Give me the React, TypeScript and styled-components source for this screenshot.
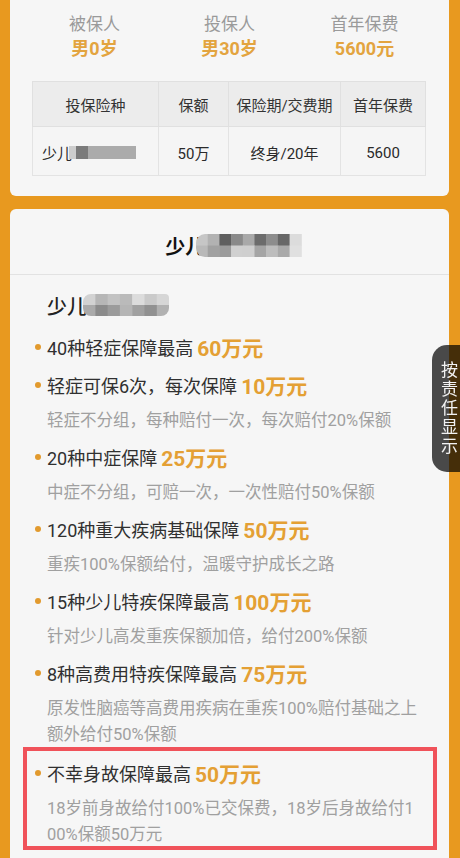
import React from "react";
import styled, { createGlobalStyle } from "styled-components";

const GlobalStyle = createGlobalStyle`
  html, body { margin: 0; padding: 0; }
  body {
    background: #e8991f;
    font-family: Roboto, "Noto Sans CJK SC", sans-serif;
    -webkit-font-smoothing: antialiased;
  }
`;

const Page = styled.div`
  padding: 0 11px 0 10px;
  background: #e8991f;
  min-height: 858px;
`;

const Card = styled.section<{ $top?: boolean }>`
  background: #f6f6f6;
  border-radius: ${(p) => (p.$top ? "0 0 6px 6px" : "6px")};
  margin-top: ${(p) => (p.$top ? "0" : "13px")};
`;

const SummaryCard = styled(Card)`
  padding: 12px 0 20px;
`;

const SummaryRow = styled.div`
  display: grid;
  grid-template-columns: repeat(3, 135px);
  padding: 0 17px;
  margin-bottom: 19px;
`;

const SummaryCol = styled.div`
  display: flex;
  flex-direction: column;
  align-items: center;
`;

const SummaryLabel = styled.div`
  font-size: 17px;
  line-height: 24px;
  color: #9a9a9a;
`;

const SummaryValue = styled.div`
  font-size: 18px;
  line-height: 26px;
  font-weight: 700;
  color: #e3a43f;
`;

const Table = styled.table`
  border-collapse: collapse;
  margin: 0 24px 0 22px;
  width: 393px;
  table-layout: fixed;
  font-size: 15px;
  color: #2a2a2a;
`;

const Th = styled.th`
  height: 44px;
  padding: 0;
  background: #ececec;
  border: 1px solid #e0e0e0;
  font-weight: 400;
  text-align: center;
  color: #333;
`;

const Td = styled.td<{ $left?: boolean }>`
  height: 45px;
  padding: ${(p) => (p.$left ? "3px 0 0 9px" : "3px 0 0")};
  border: 1px solid #e3e3e3;
  text-align: ${(p) => (p.$left ? "left" : "center")};
  background: #f5f5f5;
  white-space: nowrap;
`;

const CellName = styled.span`
  display: inline-flex;
  align-items: center;
`;

const MosaicSvg = styled.svg<{ $shift?: number; $round?: string }>`
  display: block;
  margin-left: ${(p) => p.$shift ?? 0}px;
  border-radius: ${(p) => p.$round ?? "0"};
`;

type MosaicProps = {
  rows: string[][];
  cw: number;
  ch: number;
  shift?: number;
  round?: string;
};

const Mosaic = ({ rows, cw, ch, shift, round }: MosaicProps) => {
  const cols = rows[0].length;
  return (
    <MosaicSvg
      width={cols * cw}
      height={rows.length * ch}
      $shift={shift}
      $round={round}
      viewBox={`0 0 ${cols * cw} ${rows.length * ch}`}
    >
      {rows.map((r, y) =>
        r.map((c, x) => (
          <rect key={`${x}-${y}`} x={x * cw} y={y * ch} width={cw + 0.5} height={ch + 0.5} fill={c} />
        ))
      )}
    </MosaicSvg>
  );
};

const BarMosaic = styled.span`
  display: inline-flex;
  height: 13px;
  margin-left: -3px;
`;

const BarPart = styled.span<{ $w: number; $c: string }>`
  width: ${(p) => p.$w}px;
  background: ${(p) => p.$c};
`;

const DetailCard = styled(Card)`
  padding-bottom: 40px;
`;

const DetailHeader = styled.div`
  height: 66px;
  box-sizing: border-box;
  padding: 8px 0 0 8px;
  display: flex;
  align-items: center;
  justify-content: center;
  border-bottom: 1px solid #e2e2e2;
`;

const HeaderTitle = styled.div`
  display: flex;
  align-items: center;
  font-size: 20px;
  font-weight: 700;
  color: #111;
`;

const DetailBody = styled.div`
  padding: 15px 28px 0 25px;
`;

const SubTitle = styled.div`
  display: flex;
  align-items: center;
  height: 30px;
  padding-left: 12px;
  margin-bottom: 12px;
  font-size: 20px;
  font-weight: 500;
  color: #222;
`;

const ItemList = styled.ul`
  list-style: none;
  margin: 0;
  padding: 0;
  display: flex;
  flex-direction: column;
  gap: 8px;
`;

const Item = styled.li<{ $marked?: boolean }>`
  position: relative;
  margin-top: ${(p) => (p.$marked ? "2px" : "0")};
  &::after {
    content: "";
    display: ${(p) => (p.$marked ? "block" : "none")};
    position: absolute;
    left: -12px;
    right: -16px;
    top: -11px;
    bottom: -2px;
    border: 4px solid #f0525a;
    pointer-events: none;
  }
`;

const ItemTitle = styled.div`
  display: flex;
  align-items: center;
  height: 30px;
  font-size: 18px;
  color: #303030;
  white-space: nowrap;
`;

const Bullet = styled.span`
  width: 6px;
  height: 6px;
  border-radius: 50%;
  background: #e29a2e;
  margin-right: 6px;
  flex: none;
`;

const Amount = styled.span`
  margin-left: 4px;
  font-size: 21px;
  font-weight: 700;
  color: #e4a034;
`;

const ItemSub = styled.div`
  margin-top: 8px;
  padding-left: 12px;
  font-size: 16.5px;
  line-height: 26px;
  color: #a0a0a0;
  word-break: break-all;
`;

const SideTab = styled.div`
  position: fixed;
  right: 0;
  top: 345px;
  width: 28px;
  box-sizing: border-box;
  padding: 16px 0 16px 4px;
  background: rgba(0, 0, 0, 0.7);
  border-radius: 15px 0 0 15px;
  color: #f2f2f2;
  font-size: 17px;
  line-height: 24px;
  letter-spacing: 2px;
  writing-mode: vertical-rl;
  text-orientation: upright;
`;

const items = [
  { title: "40种轻症保障最高", amount: "60万元" },
  { title: "轻症可保6次，每次保障", amount: "10万元", sub: "轻症不分组，每种赔付一次，每次赔付20%保额" },
  { title: "20种中症保障", amount: "25万元", sub: "中症不分组，可赔一次，一次性赔付50%保额" },
  { title: "120种重大疾病基础保障", amount: "50万元", sub: "重疾100%保额给付，温暖守护成长之路" },
  { title: "15种少儿特疾保障最高", amount: "100万元", sub: "针对少儿高发重疾保额加倍，给付200%保额" },
  {
    title: "8种高费用特疾保障最高",
    amount: "75万元",
    sub: "原发性脑癌等高费用疾病在重疾100%赔付基础之上额外给付50%保额",
  },
  {
    title: "不幸身故保障最高",
    amount: "50万元",
    sub: "18岁前身故给付100%已交保费，18岁后身故给付100%保额50万元",
    marked: true,
  },
];

const titleMosaic = [
  ["#c6c6c6", "#b2b2b2", "#5f5f5f", "#8a8a8a", "#a9a9a9", "#6c6c6c", "#8d8d8d", "#676767", "#dcdcdc"],
  ["#b9b9b9", "#a1a1a1", "#9b9b9b", "#d0d0d0", "#cfcfcf", "#a5a5a5", "#bdbdbd", "#a9a9a9", "#e0e0e0"],
];

const subMosaic = [
  ["#d2d2d2", "#b6b6b6", "#c2c2c2", "#bababa", "#dcdcdc", "#cacaca", "#d6d6d6"],
  ["#aaaaaa", "#8b8b8b", "#9b9b9b", "#b5b5b5", "#a1a1a1", "#919191", "#b1b1b1"],
];

export default function App() {
  return (
    <>
      <GlobalStyle />
      <Page>
        <SummaryCard $top>
          <SummaryRow>
            <SummaryCol>
              <SummaryLabel>被保人</SummaryLabel>
              <SummaryValue>男0岁</SummaryValue>
            </SummaryCol>
            <SummaryCol>
              <SummaryLabel>投保人</SummaryLabel>
              <SummaryValue>男30岁</SummaryValue>
            </SummaryCol>
            <SummaryCol>
              <SummaryLabel>首年保费</SummaryLabel>
              <SummaryValue>5600元</SummaryValue>
            </SummaryCol>
          </SummaryRow>
          <Table>
            <colgroup>
              <col style={{ width: 126 }} />
              <col style={{ width: 70 }} />
              <col style={{ width: 112 }} />
              <col style={{ width: 85 }} />
            </colgroup>
            <thead>
              <tr>
                <Th>投保险种</Th>
                <Th>保额</Th>
                <Th>保险期/交费期</Th>
                <Th>首年保费</Th>
              </tr>
            </thead>
            <tbody>
              <tr>
                <Td $left>
                  <CellName>
                    少儿
                    <BarMosaic>
                      <BarPart $w={7} $c="#cdcdcd" />
                      <BarPart $w={12} $c="#7b7b7b" />
                      <BarPart $w={48} $c="#ababab" />
                    </BarMosaic>
                  </CellName>
                </Td>
                <Td>50万</Td>
                <Td>终身/20年</Td>
                <Td>5600</Td>
              </tr>
            </tbody>
          </Table>
        </SummaryCard>

        <DetailCard>
          <DetailHeader>
            <HeaderTitle>
              少儿
              <Mosaic rows={titleMosaic} cw={11.7} ch={11.5} shift={-9} round="9px 0 0 9px" />
            </HeaderTitle>
          </DetailHeader>
          <DetailBody>
            <SubTitle>
              少儿
              <Mosaic rows={subMosaic} cw={12.3} ch={11} shift={-4} round="8px 4px 8px 8px" />
            </SubTitle>
            <ItemList>
              {items.map((it) => (
                <Item key={it.title} $marked={it.marked}>
                  <ItemTitle>
                    <Bullet />
                    {it.title}
                    <Amount>{it.amount}</Amount>
                  </ItemTitle>
                  {it.sub && <ItemSub>{it.sub}</ItemSub>}
                </Item>
              ))}
            </ItemList>
          </DetailBody>
        </DetailCard>
      </Page>
      <SideTab>按责任显示</SideTab>
    </>
  );
}
